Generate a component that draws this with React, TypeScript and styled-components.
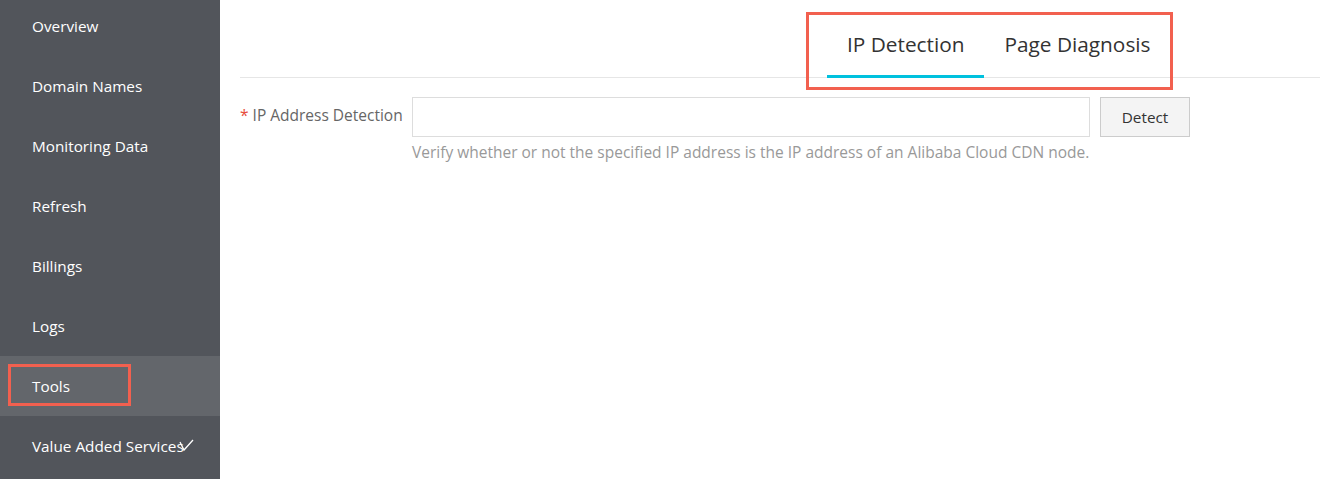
import React from 'react';
import styled, { createGlobalStyle } from 'styled-components';

const GlobalStyle = createGlobalStyle`
  html, body {
    margin: 0;
    padding: 0;
    background: #fff;
    font-family: "Open Sans", "Noto Sans", sans-serif;
  }
`;

const menuItems = [
  'Overview',
  'Domain Names',
  'Monitoring Data',
  'Refresh',
  'Billings',
  'Logs',
  'Tools',
  'Value Added Services',
];

const App: React.FC = () => {
  return (
    <SPage>
      <GlobalStyle />
      <Sidebar>
        <MenuList>
          {menuItems.map((item) => (
            <MenuItem key={item} active={item === 'Tools'}>
              {item}
              {item === 'Tools' && <Highlight />}
              {item === 'Value Added Services' && (
                <Chevron width="16" height="13" viewBox="0 0 16 13">
                  <polyline points="1,3 5,11 14,1" fill="none" stroke="#fff" strokeWidth="1.3" />
                </Chevron>
              )}
            </MenuItem>
          ))}
        </MenuList>
      </Sidebar>
      <Main>
        <TabBar>
          <TabGroup>
            <Tab active>IP Detection</Tab>
            <Tab>Page Diagnosis</Tab>
            <TabHighlight />
          </TabGroup>
        </TabBar>
        <FormRow>
          <Label>
            <Star>*</Star>IP Address Detection
          </Label>
          <Field>
            <InputRow>
              <Input type="text" />
              <DetectButton>Detect</DetectButton>
            </InputRow>
            <Help>
              Verify whether or not the specified IP address is the IP address of an Alibaba Cloud CDN node.
            </Help>
          </Field>
        </FormRow>
      </Main>
    </SPage>
  );
};

export default App;

const SPage = styled.div`
  display: flex;
  width: 1320px;
  height: 479px;
  overflow: hidden;
`;

const Sidebar = styled.nav`
  width: 220px;
  flex-shrink: 0;
  background: #52555b;
  overflow: hidden;
`;

const MenuList = styled.ul`
  list-style: none;
  margin: -4px 0 0;
  padding: 0;
`;

const MenuItem = styled.li<{ active?: boolean }>`
  position: relative;
  display: flex;
  align-items: center;
  height: 60px;
  padding-left: 32px;
  font-size: 15.3px;
  color: #fff;
  background: ${(p) => (p.active ? '#63666b' : 'transparent')};
`;

const Highlight = styled.span`
  position: absolute;
  left: 8px;
  top: 8px;
  width: 123px;
  height: 42px;
  border: 3px solid #f2604f;
  box-sizing: border-box;
`;

const Chevron = styled.svg`
  position: absolute;
  left: 179px;
  top: 23px;
`;

const Main = styled.main`
  flex: 1;
  padding-left: 20px;
`;

const TabBar = styled.div`
  display: flex;
  height: 77px;
  border-bottom: 1px solid #e6e6e6;
  padding-left: 587px;
`;

const TabGroup = styled.div`
  position: relative;
  display: flex;
  align-items: flex-end;
`;

const Tab = styled.div<{ active?: boolean }>`
  display: flex;
  align-items: center;
  height: 77px;
  padding: 11px 20px 0;
  box-sizing: border-box;
  font-size: 20.8px;
  color: #333;
  border-bottom: 3px solid ${(p) => (p.active ? '#00c1de' : 'transparent')};
  margin-bottom: -1px;
`;

const TabHighlight = styled.span`
  position: absolute;
  left: -21px;
  right: -3px;
  top: 12px;
  bottom: -13px;
  border: 3px solid #f2604f;
`;

const FormRow = styled.div`
  display: flex;
  margin-top: 19px;
`;

const Label = styled.label`
  width: 172px;
  flex-shrink: 0;
  padding-top: 7px;
  font-size: 15.5px;
  color: #666;
`;

const Star = styled.span`
  color: #e74c3c;
  margin-right: 4px;
`;

const Field = styled.div`
  display: flex;
  flex-direction: column;
`;

const InputRow = styled.div`
  display: flex;
  gap: 10px;
`;

const Input = styled.input`
  width: 678px;
  height: 40px;
  box-sizing: border-box;
  border: 1px solid #ddd;
  outline: none;
`;

const DetectButton = styled.button`
  width: 90px;
  height: 40px;
  background: #f4f4f4;
  border: 1px solid #ccc;
  font-family: inherit;
  font-size: 15.3px;
  color: #333;
  padding-bottom: 2px;
`;

const Help = styled.div`
  margin-top: 4px;
  font-size: 15.5px;
  color: #999;
`;
